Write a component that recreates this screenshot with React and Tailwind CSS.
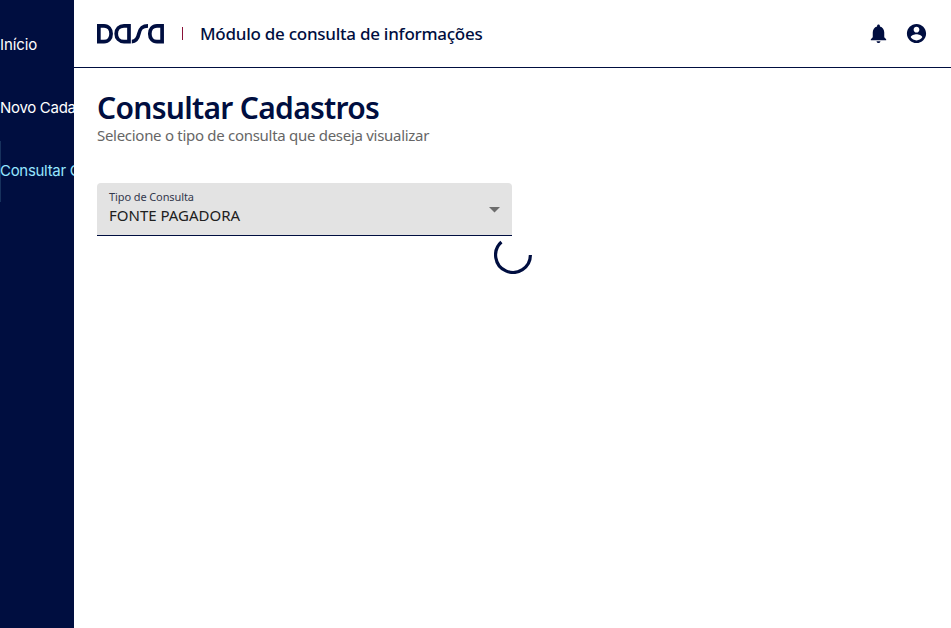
function Logo() {
  return (
    <svg width="68" height="20" viewBox="0 0 68 20" fill="none" stroke="#000e40" strokeWidth="3.7" className="shrink-0" aria-label="DASA">
      <path d="M1.85 1.85H7C11.6 1.85 14.1 5.3 14.1 9.7S11.6 17.6 7 17.6H1.85Z" />
      <path d="M32 1.85h-5C22.2 1.85 19.2 5.3 19.2 9.7s3 7.9 7.8 7.9h5Z" />
      <path d="M34.8 17.6c4.7 0 6.1-3.3 7.1-7.9s2.6-7.85 9.1-7.85" />
      <path d="M65.1 1.85h-5.1C55.3 1.85 52.8 5.3 52.8 9.7s2.5 7.9 7.2 7.9h5.1Z" />
    </svg>
  );
}

const navItem = "flex h-[61px] mb-[2px] items-center whitespace-nowrap border-l";

export default function App() {
  return (
    <div className="flex h-screen overflow-hidden bg-white font-['Noto_Sans',sans-serif] text-[#000e40]">
      <nav className="w-[74px] shrink-0 overflow-hidden bg-[#000e40] pt-[15px] font-['Inter',sans-serif] text-[15px] tracking-[-0.3px] text-white">
        <a className={navItem + " border-transparent"}><span className="-ml-px tracking-[-0.1px]">Início</span></a>
        <a className={navItem + " border-transparent"}><span className="-ml-px">Novo Cadastro</span></a>
        <a className={navItem + " border-[#17315c] text-[#96e6ff]"}><span className="-ml-px">Consultar Cadastros</span></a>
      </nav>
      <div className="min-w-0 flex-1">
        <header className="flex h-[68px] items-center border-b border-[#000e40] pl-[23px] pr-[23px]">
          <Logo />
          <span className="ml-[17px] h-[13px] w-px bg-[#8a1238]" />
          <span className="ml-[17px] whitespace-nowrap text-[17px] font-medium tracking-[-0.26px]">Módulo de consulta de informações</span>
          <svg className="ml-auto" width="23" height="23" viewBox="0 0 24 24" fill="currentColor">
            <path d="M12 22c1.1 0 2-.9 2-2h-4c0 1.1.89 2 2 2zm6-6v-5c0-3.07-1.64-5.64-4.5-6.32V4c0-.83-.67-1.5-1.5-1.5s-1.5.67-1.5 1.5v.68C7.63 5.36 6 7.92 6 11v5l-2 2v1h16v-1l-2-2z" />
          </svg>
          <svg className="ml-[15px]" width="23" height="23" viewBox="0 0 24 24" fill="currentColor">
            <path d="M12 2C6.48 2 2 6.48 2 12s4.48 10 10 10 10-4.48 10-10S17.52 2 12 2zm0 3c1.66 0 3 1.34 3 3s-1.34 3-3 3-3-1.34-3-3 1.34-3 3-3zm0 14.2c-2.5 0-4.71-1.28-6-3.22.03-1.99 4-3.08 6-3.08 1.99 0 5.97 1.09 6 3.08-1.29 1.94-3.5 3.22-6 3.22z" />
          </svg>
        </header>
        <main className="px-[23px] pt-[21px]">
          <h1 className="whitespace-nowrap text-[30px] font-semibold leading-[37px] tracking-[-0.7px]">Consultar Cadastros</h1>
          <p className="whitespace-nowrap text-[15px] leading-[19px] tracking-[-0.29px] text-[#666]">Selecione o tipo de consulta que deseja visualizar</p>
          <div className="mt-[38px] flex h-[53px] w-[415px] items-center justify-between rounded-t-[4px] border-b border-[#000e40] bg-[#e3e3e3] pl-3 pr-3">
            <div className="-mt-[4px] whitespace-nowrap">
              <div className="text-[11px] leading-[16px] tracking-[-0.1px] text-[#33384d]">Tipo de Consulta</div>
              <div className="text-[15px] leading-[20px] text-[#202020]">FONTE PAGADORA</div>
            </div>
            <svg className="mt-[2px]" width="11" height="6" viewBox="0 0 11 6" fill="#6d6d6d"><path d="M0 0h11L5.5 5.5z" /></svg>
          </div>
          <div className="flex justify-center">
            <svg width="38" height="38" viewBox="0 0 38 38" fill="none" stroke="#000e40" strokeWidth="3.2">
              <path d="M36.4 19A17.4 17.4 0 1 1 7.4 6" />
            </svg>
          </div>
        </main>
      </div>
    </div>
  );
}
